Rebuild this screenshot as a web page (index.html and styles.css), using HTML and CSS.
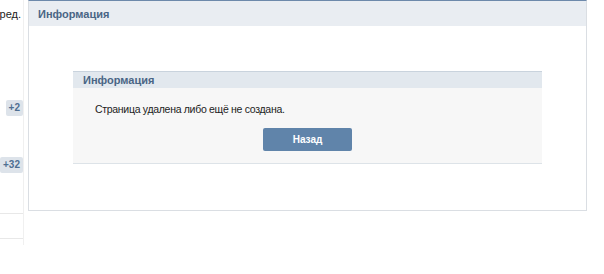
FILE: index.html
```html
<!DOCTYPE html>
<html lang="ru">
<head>
    <meta charset="UTF-8">
    <title>Информация</title>
    <link rel="stylesheet" href="styles.css">
</head>
<body>

<div class="page">
    <div class="side">
        <div class="side-text">ред.</div>
        <div class="badge badge-first">+2</div>
        <div class="badge badge-second">+32</div>
        <div class="side-line line-first"></div>
        <div class="side-line line-second"></div>
    </div>

    <div class="wrap">
        <div class="wrap-head">Информация</div>
        <div class="wrap-body">
            <div class="box">
                <div class="box-head">Информация</div>
                <div class="box-body">
                    <div class="msg">Страница удалена либо ещё не создана.</div>
                    <button class="back-btn">Назад</button>
                </div>
            </div>
        </div>
    </div>
</div>

</body>
</html>
```

FILE: styles.css
```css
body {
    margin: 0;
    background: #fff;
    font-family: "Liberation Sans", Arial, sans-serif;
    font-size: 11px;
    color: #000;
}
.page {
    display: flex;
    gap: 4px;
    width: 604px;
    height: 274px;
}
.side {
    width: 23px;
    border-right: 1px solid #f0f0f0;
    height: 245px;
    display: flex;
    flex-direction: column;
    align-items: flex-end;
}
.side-text {
    margin-top: 8px;
    margin-right: 2px;
    line-height: 13px;
    color: #222;
    white-space: nowrap;
}
.badge {
    background: #dde3ea;
    color: #4f6f92;
    font-weight: bold;
    font-size: 10px;
    padding: 2px 3px;
    border-radius: 2px;
    line-height: 12px;
    height: 12px;
}
.badge-first {
    margin-top: 79px;
}
.badge-second {
    margin-top: 41px;
}
.side-line {
    width: 23px;
    border-top: 1px solid #e8e8e8;
}
.line-first {
    margin-top: 40px;
}
.line-second {
    margin-top: 24px;
}
.wrap {
    width: 559px;
    height: 211px;
    border: 1px solid #dadee3;
    border-top: 1px solid #6d89ab;
    box-sizing: border-box;
}
.wrap-head {
    height: 25px;
    line-height: 27px;
    background: #e9edf2;
    color: #4a6585;
    font-weight: bold;
    padding-left: 9px;
}
.wrap-body {
    padding: 45px 44px 0 44px;
}
.box {
    border-bottom: 1px solid #dde3e8;
}
.box-head {
    height: 16px;
    line-height: 17px;
    border-top: 1px solid #c9d3dd;
    background: #e2e8ee;
    color: #4a6585;
    font-weight: bold;
    padding-left: 10px;
}
.box-body {
    background: #f7f7f7;
    height: 75px;
    display: flex;
    flex-direction: column;
    align-items: center;
}
.msg {
    align-self: flex-start;
    margin-top: 15px;
    padding-left: 22px;
    line-height: 13px;
    font-size: 10.5px;
    letter-spacing: -0.3px;
    color: #222;
}
.back-btn {
    margin-top: 12px;
    width: 89px;
    height: 23px;
    background: #6084aa;
    color: #fff;
    border: none;
    border-radius: 2px;
    font-family: "Liberation Sans", Arial, sans-serif;
    font-size: 10px;
    font-weight: bold;
    cursor: pointer;
}
```
